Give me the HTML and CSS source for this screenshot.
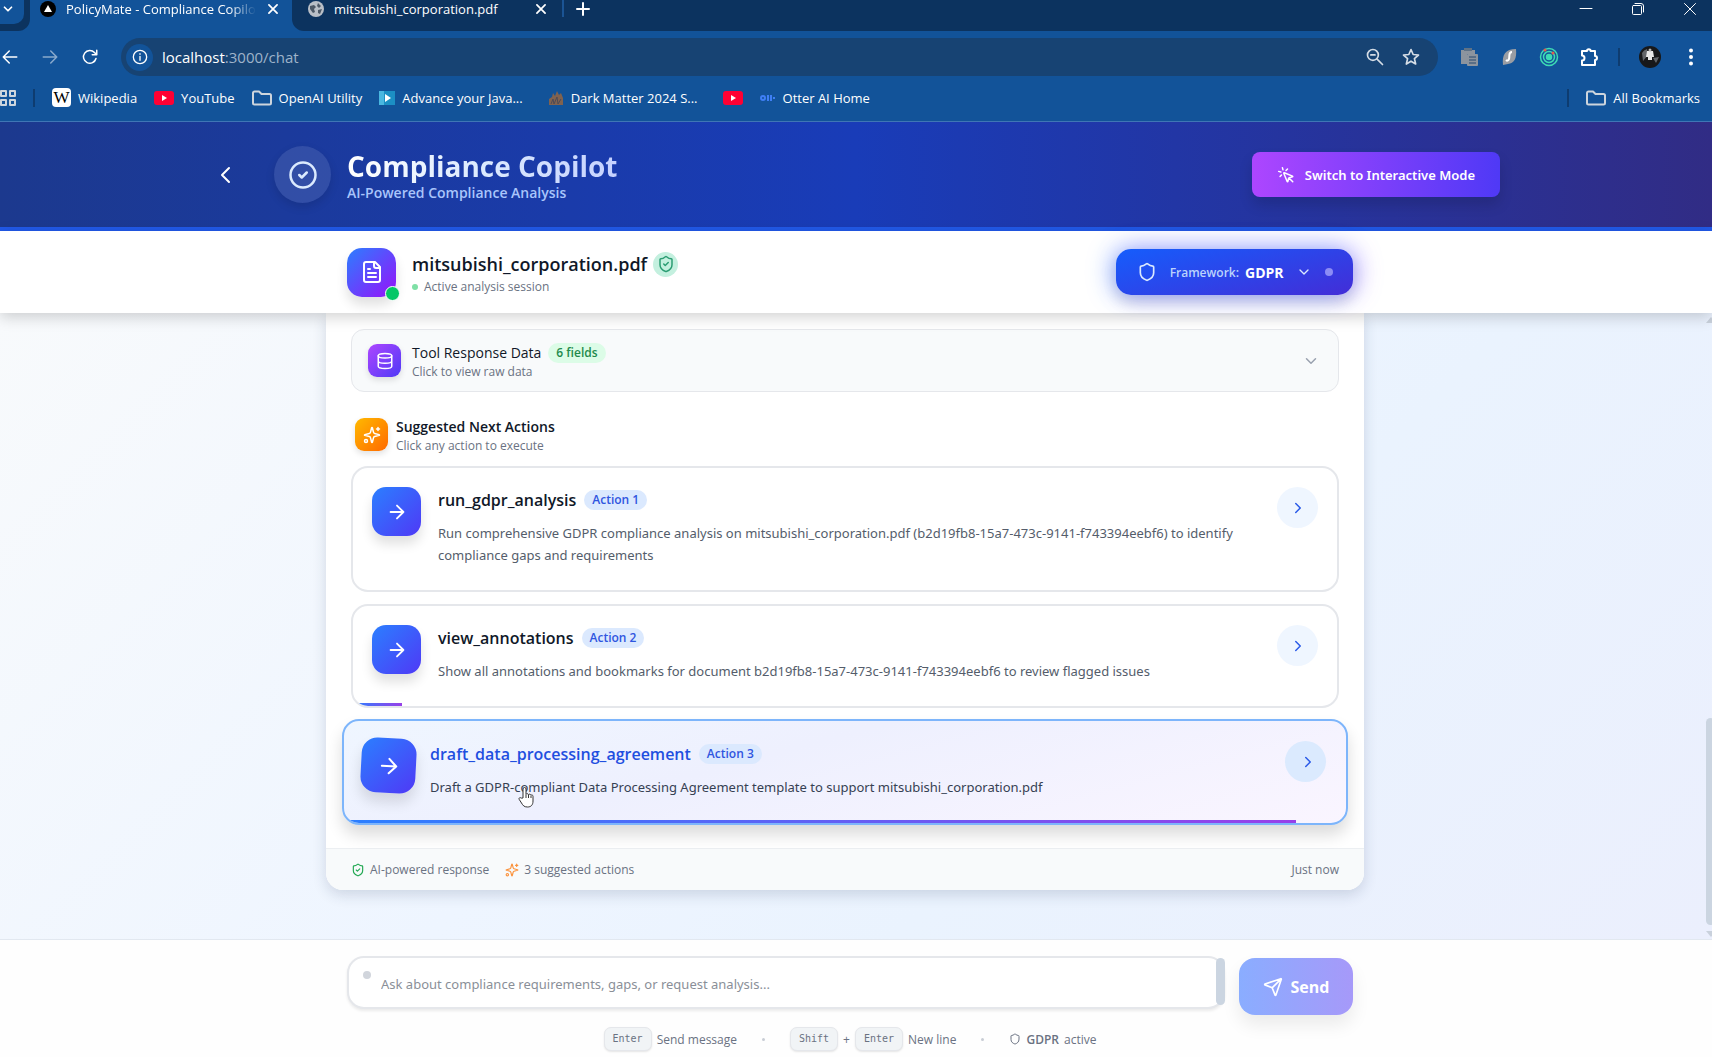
FILE: index.html
```html
<!DOCTYPE html>
<html lang="en">
<head>
  <meta charset="UTF-8">
  <meta name="viewport" content="width=device-width, initial-scale=1.0">
  <title>PolicyMate - Compliance Copilot</title>
  <link rel="stylesheet" href="styles.css">
</head>
<body>
  <svg class="defs" aria-hidden="true">
    <symbol id="i-arrow" viewBox="0 0 24 24"><path d="M5 12h14M12 5l7 7-7 7"/></symbol>
    <symbol id="i-right" viewBox="0 0 24 24"><path d="m9 18 6-6-6-6"/></symbol>
    <symbol id="i-left" viewBox="0 0 24 24"><path d="m15 19-7-7 7-7"/></symbol>
    <symbol id="i-down" viewBox="0 0 24 24"><path d="m6 9 6 6 6-6"/></symbol>
    <symbol id="i-x" viewBox="0 0 24 24"><path d="M5 5l14 14M19 5 5 19"/></symbol>
    <symbol id="i-shield" viewBox="0 0 24 24"><path d="M20 13c0 5-3.500 7.500-7.660 8.950a1 1 0 0 1-.67-.01C7.500 20.500 4 18 4 13V6a1 1 0 0 1 1-1c2 0 4.500-1.200 6.240-2.720a1.170 1.170 0 0 1 1.520 0C14.510 3.810 17 5 19 5a1 1 0 0 1 1 1z"/></symbol>
    <symbol id="i-shield-check" viewBox="0 0 24 24"><path d="M20 13c0 5-3.500 7.500-7.660 8.950a1 1 0 0 1-.67-.01C7.500 20.500 4 18 4 13V6a1 1 0 0 1 1-1c2 0 4.500-1.200 6.240-2.720a1.170 1.170 0 0 1 1.520 0C14.510 3.810 17 5 19 5a1 1 0 0 1 1 1z"/><path d="m9 12 2 2 4-4"/></symbol>
    <symbol id="i-sparkles" viewBox="0 0 24 24"><path d="M9.940 15.500A2 2 0 0 0 8.500 14.060l-6.140-1.580a.5.5 0 0 1 0-.96L8.500 9.940A2 2 0 0 0 9.940 8.500l1.580-6.140a.5.5 0 0 1 .96 0L14.060 8.500A2 2 0 0 0 15.500 9.940l6.140 1.580a.5.5 0 0 1 0 .96L15.500 14.060a2 2 0 0 0-1.440 1.440l-1.580 6.140a.5.5 0 0 1-.96 0z"/><path d="M20 2v4M22 4h-4"/><circle cx="4" cy="20" r="2"/></symbol>
    <symbol id="i-folder" viewBox="0 0 20 16"><path d="M1 13V3a1.500 1.500 0 0 1 1.500-1.500H7l2.500 2.500h8A1.500 1.500 0 0 1 19 5.500V13a1.500 1.500 0 0 1-1.500 1.500h-15A1.500 1.500 0 0 1 1 13z"/></symbol>
    <symbol id="i-youtube" viewBox="0 0 20 14"><rect width="20" height="14" rx="3" fill="#f03" stroke="none"/><path d="M8 4v6l5-3z" fill="#fff" stroke="none"/></symbol>
  </svg>

  <div class="browser">
    <div class="tabstrip">
      <div class="strip-start"><button class="tab-search" aria-label="Search tabs"><svg class="icon s14 w3"><use href="#i-down"/></svg></button></div>
      <div class="tab active">
        <svg class="s16" viewBox="0 0 16 16"><circle cx="8" cy="8" r="8" fill="#000"/><path d="M8 4l4 7H4z" fill="#fff"/></svg>
        <span class="tab-title">PolicyMate - Compliance Copilot</span>
        <button class="icon-btn" aria-label="Close tab"><svg class="icon s14 w3"><use href="#i-x"/></svg></button>
      </div>
      <div class="strip-rest">
        <div class="tab">
          <svg class="s16" viewBox="0 0 16 16"><circle cx="8" cy="8" r="8" fill="#b9bfc7"/><path d="M2 5l4-1 2 2-2 2 1 3-2 1-3-4zM10 2l3 3-2 2-2-2zM10 9l4-1-2 5-2-1z" fill="#4c5866"/></svg>
          <span class="tab-title">mitsubishi_corporation.pdf</span>
          <button class="icon-btn" aria-label="Close tab"><svg class="icon s14 w3"><use href="#i-x"/></svg></button>
        </div>
        <span class="tab-sep"></span>
        <button class="icon-btn" aria-label="New tab"><svg class="icon s16 w3" viewBox="0 0 24 24"><path d="M12 3v18M3 12h18"/></svg></button>
        <div class="window-btns">
          <button class="icon-btn" aria-label="Minimize"><svg class="icon s14 w1" viewBox="0 0 14 14"><path d="M1 6.500h12"/></svg></button>
          <button class="icon-btn" aria-label="Restore"><svg class="icon s14 w1" viewBox="0 0 14 14"><rect x="1.500" y="3.500" width="9" height="9" rx="1"/><path d="M4 1.500h6a2.500 2.500 0 0 1 2.500 2.500v6"/></svg></button>
          <button class="icon-btn" aria-label="Close window"><svg class="icon s14 w1" viewBox="0 0 14 14"><path d="M1.500 1.500l11 11M12.500 1.500l-11 11"/></svg></button>
        </div>
      </div>
    </div>

    <div class="toolbar">
      <div class="nav-btns">
        <button class="icon-btn" aria-label="Back"><svg class="icon s18" viewBox="0 0 24 24"><path d="M21 12H3M11 4l-8 8 8 8"/></svg></button>
        <button class="icon-btn dim" aria-label="Forward"><svg class="icon s18" viewBox="0 0 24 24"><path d="M3 12h18M13 4l8 8-8 8"/></svg></button>
        <button class="icon-btn" aria-label="Reload"><svg class="icon s18" viewBox="0 0 24 24"><path d="M20 14a8.500 8.500 0 1 1-2-8l2.500 2.500M21 3v6h-6"/></svg></button>
      </div>
      <div class="omnibox">
        <span class="site-info"><svg class="icon s16" viewBox="0 0 24 24"><circle cx="12" cy="12" r="10"/><path d="M12 11v6M12 7v1"/></svg></span>
        <span class="url">localhost<span>:3000/chat</span></span>
        <svg class="icon s20" viewBox="0 0 24 24"><circle cx="9.500" cy="9.500" r="6.500"/><path d="M7 9.500h5M14.500 14.500 21 21"/></svg>
        <svg class="icon s20" viewBox="0 0 24 24"><path d="M12 3l2.600 6 6.400.6-4.900 4.300 1.500 6.500L12 17l-5.600 3.400 1.500-6.500L3 9.600 9.400 9z"/></svg>
      </div>
      <div class="extensions">
        <svg class="s20" viewBox="0 0 20 20"><path d="M2 3h14v4H8v10H2z" fill="#8c949e"/><path d="M5 1h8v3H5z" fill="#5f7286"/><rect x="8" y="7" width="11" height="12" rx="1" fill="#8c949e"/><path d="M10 10h7M10 13h7M10 16h7" stroke="#26486e"/></svg>
        <svg class="s20" viewBox="0 0 20 20"><path d="M4 18C3 8 6 2 17 2c1 10-2 14-8 15z" fill="#9a9da3"/><path d="M13 5c-4 0-2 4-3 7-1 2-2 2-3 1" fill="none" stroke="#fff" stroke-width="2"/></svg>
        <svg class="s20" viewBox="0 0 20 20" fill="none" stroke="#3ddbb4" stroke-width="1.500"><circle cx="10" cy="10" r="8.500"/><circle cx="10" cy="10" r="5.500"/><circle cx="10" cy="10" r="2.500" fill="#3ddbb4"/><circle cx="6" cy="3" r="1.500" fill="#e0604c" stroke="none"/><circle cx="14" cy="6" r="1.500" fill="#e0604c" stroke="none"/></svg>
        <svg class="icon s20" viewBox="0 0 20 20"><path d="M3 4h5a1.800 1.800 0 0 1 3.600 0H16v5a2 2 0 0 1 0 4v5H3v-4.500a2.500 2.500 0 0 0 0-5z"/></svg>
        <span class="bar-sep"></span>
        <svg class="s22" viewBox="0 0 22 22"><circle cx="11" cy="11" r="11" fill="#17181a"/><path d="M3 7a9 9 0 0 1 5-4l1 6-5 6zM14 12l6-1-3 6z" fill="#63666a"/><path d="M8 5h6l1 6h-2v3h-4v-3H7z" fill="#e8e8e8"/><circle cx="11" cy="4" r="1.500" fill="#b5b5b5"/></svg>
        <svg class="s20" viewBox="0 0 20 20" fill="#fff"><circle cx="10" cy="3.500" r="2"/><circle cx="10" cy="10" r="2"/><circle cx="10" cy="16.500" r="2"/></svg>
      </div>
    </div>

    <nav class="bookmarks">
      <svg class="icon s16" viewBox="0 0 16 16"><path d="M1 1h5v5H1zM10 1h5v5h-5zM1 10h5v5H1zM10 10h5v5h-5z"/></svg>
      <span class="bar-sep"></span>
      <a href="#"><span class="wiki">W</span>Wikipedia</a>
      <a href="#"><svg class="yt"><use href="#i-youtube"/></svg>YouTube</a>
      <a href="#"><svg class="icon folder"><use href="#i-folder"/></svg>OpenAI Utility</a>
      <a href="#" class="long"><svg class="s16" viewBox="0 0 16 16"><path d="M0 1h16v14H0z" fill="#1c8fc4"/><path d="M0 1h5v14H0z" fill="#49b7e0"/><path d="M6 4v8l6-4z" fill="#fff"/></svg>Advance your Java...</a>
      <a href="#" class="long"><svg class="s16" viewBox="0 0 16 16"><path d="M1 15V9l3-2 1-4 2 3 2-5 2 4 2-2 2 5v7z" fill="#80624f"/><path d="M3 14l2-5 1 5 3-7 1 7 3-5" stroke="#4d4a55" fill="none"/></svg>Dark Matter 2024 S...</a>
      <a href="#" aria-label="YouTube"><svg class="yt"><use href="#i-youtube"/></svg></a>
      <a href="#"><svg class="s16" viewBox="0 0 16 16" fill="none" stroke="#3f7ff5" stroke-width="2"><circle cx="3" cy="8" r="2"/><path d="M8 5v6M11 5v6M14 7v2"/></svg>Otter AI Home</a>
      <span class="bar-sep push"></span>
      <a href="#"><svg class="icon folder"><use href="#i-folder"/></svg>All Bookmarks</a>
    </nav>
  </div>

  <header class="app-header">
    <div class="header-inner">
      <button class="back" aria-label="Go back"><svg class="icon s24"><use href="#i-left"/></svg></button>
      <div class="logo"><svg class="icon s30" viewBox="0 0 24 24"><circle cx="12" cy="12" r="10"/><path d="m9 12 2 2 4-4"/></svg></div>
      <div class="brand">
        <h1>Compliance Copilot</h1>
        <p>AI-Powered Compliance Analysis</p>
      </div>
      <button class="mode-btn">
        <svg class="icon s18" viewBox="0 0 24 24"><path d="M14 4.100 12 6M5.100 8l-2.900-.8M6 12l-1.900 2M7.200 2.200 8 5.100M9.040 9.690a.5.5 0 0 1 .65-.65l11 4.500a.5.5 0 0 1-.07.950l-4.350 1.040a1 1 0 0 0-.74.74l-1.040 4.350a.5.5 0 0 1-.95.070zM16 16l5 5"/></svg>
        Switch to Interactive Mode
      </button>
    </div>
  </header>

  <section class="doc-bar">
    <div class="doc-inner">
      <div class="doc-icon">
        <svg class="icon s24" viewBox="0 0 24 24"><path d="M15 2H6a2 2 0 0 0-2 2v16a2 2 0 0 0 2 2h12a2 2 0 0 0 2-2V7zM14 2v4a2 2 0 0 0 2 2h4M10 9H8M16 13H8M16 17H8"/></svg>
        <span class="online"></span>
      </div>
      <div class="doc-text">
        <h2>mitsubishi_corporation.pdf <span class="verified"><svg class="icon s18"><use href="#i-shield-check"/></svg></span></h2>
        <p><span class="dot green"></span>Active analysis session</p>
      </div>
      <div class="framework">
        <svg class="icon s20"><use href="#i-shield"/></svg>
        <label for="framework">Framework:</label>
        <select id="framework"><option>GDPR</option></select>
        <svg class="icon s16"><use href="#i-down"/></svg>
        <span class="dot pale"></span>
      </div>
    </div>
  </section>

  <main class="chat">
    <article class="message">
      <div class="message-body">
        <button class="tool">
          <span class="tile purple"><svg class="icon s18" viewBox="0 0 24 24"><ellipse cx="12" cy="5" rx="9" ry="3"/><path d="M3 5v14a9 3 0 0 0 18 0V5M3 12a9 3 0 0 0 18 0"/></svg></span>
          <span class="stack">
            <span class="row-title">Tool Response Data <span class="pill mint">6 fields</span></span>
            <span class="note">Click to view raw data</span>
          </span>
          <svg class="icon s18"><use href="#i-down"/></svg>
        </button>

        <div class="suggest-head">
          <span class="tile orange"><svg class="icon s18"><use href="#i-sparkles"/></svg></span>
          <div class="stack">
            <h3>Suggested Next Actions</h3>
            <p class="note">Click any action to execute</p>
          </div>
        </div>

        <div class="actions">
          <button class="action">
            <span class="action-icon"><svg class="icon s22"><use href="#i-arrow"/></svg></span>
            <span class="action-text">
              <span class="action-title">run_gdpr_analysis <span class="pill blue">Action 1</span></span>
              <span class="desc">Run comprehensive GDPR compliance analysis on mitsubishi_corporation.pdf (b2d19fb8-15a7-473c-9141-f743394eebf6) to identify compliance gaps and requirements</span>
            </span>
            <span class="go"><svg class="icon s18"><use href="#i-right"/></svg></span>
          </button>
          <button class="action">
            <span class="action-icon"><svg class="icon s22"><use href="#i-arrow"/></svg></span>
            <span class="action-text">
              <span class="action-title">view_annotations <span class="pill blue">Action 2</span></span>
              <span class="desc">Show all annotations and bookmarks for document b2d19fb8-15a7-473c-9141-f743394eebf6 to review flagged issues</span>
            </span>
            <span class="go"><svg class="icon s18"><use href="#i-right"/></svg></span>
            <span class="track"><span class="progress" style="width:5%"></span></span>
          </button>
          <button class="action hovered">
            <span class="action-icon"><svg class="icon s22"><use href="#i-arrow"/></svg></span>
            <span class="action-text">
              <span class="action-title">draft_data_processing_agreement <span class="pill blue">Action 3</span></span>
              <span class="desc">Draft a GDPR-compliant Data Processing Agreement template to support mitsubishi_corporation.pdf</span>
            </span>
            <span class="go"><svg class="icon s18"><use href="#i-right"/></svg></span>
            <span class="track"><span class="progress" style="width:95%"></span></span>
            <svg class="cursor" viewBox="0 0 16 22"><path d="M5 12V3a1.500 1.500 0 0 1 3 0v5.500a1.300 1.300 0 0 1 2.500.3 1.300 1.300 0 0 1 2.400.6 1.200 1.200 0 0 1 2.100.9V15c0 4-2 6-5.500 6S5 19.500 3.500 17L1.200 13.400c-.8-1.400.9-2.400 2-1.300z" fill="#fff" stroke="#333" stroke-width="1"/><path d="M8 9v3M10.500 9v3M13 10v2" stroke="#333" fill="none"/></svg>
          </button>
        </div>
      </div>
      <footer class="message-foot">
        <span><svg class="icon s14 ok"><use href="#i-shield-check"/></svg>AI-powered response</span>
        <span><svg class="icon s14 spark"><use href="#i-sparkles"/></svg>3 suggested actions</span>
        <time>Just now</time>
      </footer>
    </article>
    <div class="scrollbar"><span class="up"></span><span class="thumb"></span><span class="down"></span></div>
  </main>

  <footer class="composer">
    <form class="composer-row">
      <div class="field">
        <span class="dot grey"></span>
        <textarea rows="1" aria-label="Message" placeholder="Ask about compliance requirements, gaps, or request analysis..."></textarea>
        <span class="field-thumb"></span>
      </div>
      <button class="send" type="button"><svg class="icon s20" viewBox="0 0 24 24"><path d="M14.540 21.690a.5.5 0 0 0 .94-.02l6.500-19a.5.5 0 0 0-.64-.64l-19 6.500a.5.5 0 0 0-.02.940l7.930 3.180a2 2 0 0 1 1.110 1.110zM21.850 2.150l-10.940 10.940"/></svg>Send</button>
    </form>
    <div class="hints">
      <span><kbd>Enter</kbd>Send message</span>
      <i></i>
      <span><kbd>Shift</kbd>+<kbd>Enter</kbd>New line</span>
      <i></i>
      <span><svg class="icon s12"><use href="#i-shield"/></svg><b>GDPR</b>active</span>
    </div>
  </footer>
</body>
</html>
```

FILE: styles.css
```css
:root { --toolbar:#125399; --strip:#0c335f; --blue:#2b7fff; --indigo:#4f39f6; --purple:#ad46ff; --muted:#6a7282; --line:#e5e7eb; }
*{box-sizing:border-box;}
body{margin:0;height:100vh;display:flex;flex-direction:column;overflow:hidden;background:#fff;color:#101828;font-family:'Open Sans','Noto Sans',sans-serif;}
h1,h2,h3,p{margin:0;}
button,select,textarea{font-family:inherit;color:inherit;border:0;background:none;padding:0;margin:0;}
button{cursor:pointer;text-align:left;}
svg{flex:none;display:block;}
.defs{position:absolute;width:0;height:0;}
.icon{fill:none;stroke:currentColor;stroke-width:2;stroke-linecap:round;stroke-linejoin:round;}
.w1{stroke-width:1;}
.w3{stroke-width:3;}
.s12{width:12px;height:12px;}
.s14{width:14px;height:14px;}
.s16{width:16px;height:16px;}
.s18{width:18px;height:18px;}
.s20{width:20px;height:20px;}
.s22{width:22px;height:22px;}
.s24{width:24px;height:24px;}
.s30{width:30px;height:30px;}

/* browser frame */
.browser{flex:none;background:var(--toolbar);color:#fff;border-bottom:1px solid #3f76b5;}
.tabstrip{display:flex;height:31px;}
.strip-start{width:30px;background:var(--strip);border-bottom-right-radius:12px;}
.tab-search{display:flex;justify-content:center;width:24px;height:24px;padding:2px 8px 0 0;background:var(--toolbar);border-bottom-right-radius:10px;}
.tab{display:flex;align-items:center;gap:10px;width:262px;height:18px;padding:0 12px 0 10px;font-size:13px;}
.tab-title{flex:1;min-width:0;overflow:hidden;white-space:nowrap;}
.tab.active .tab-title{-webkit-mask-image:linear-gradient(90deg,#000 86%,transparent);mask-image:linear-gradient(90deg,#000 86%,transparent);}
.strip-rest{flex:1;display:flex;background:var(--strip);border-bottom-left-radius:12px;}
.strip-rest .tab{width:270px;padding:0 14px 0 16px;}
.tab-sep{width:2px;height:17px;background:#1b5494;margin-right:11px;}
.icon-btn{display:flex;align-items:center;height:18px;}
.icon-btn.dim{opacity:.5;}
.window-btns{display:flex;gap:38px;margin-left:auto;padding-right:15px;height:16px;}
.toolbar{display:flex;align-items:center;padding-top:7px;padding-right:11px;}
.nav-btns{display:flex;gap:22px;width:121px;padding-left:1px;}
.omnibox{flex:1;display:flex;align-items:center;gap:16px;height:38px;padding:0 17px 0 5px;border-radius:19px;background:#174373;color:#d5dde6;}
.site-info{display:grid;place-items:center;width:27px;height:27px;border-radius:50%;background:var(--toolbar);color:#fff;}
.url{flex:1;margin-left:-7px;font-size:15px;color:#fff;}
.url span{color:#9fb3ca;}
.extensions{display:flex;align-items:center;gap:20px;padding-left:21px;}
.bar-sep{width:2px;height:18px;background:#0e3c70;}
.extensions .bar-sep{margin:0 -1px;}
.bookmarks{display:flex;align-items:center;gap:17px;height:45px;padding:0 12px 2px 0;font-size:13px;}
.bookmarks a{display:flex;align-items:center;gap:7px;color:inherit;text-decoration:none;white-space:nowrap;}
.bookmarks .long{padding-right:8px;}
.bookmarks .push{margin-left:auto;}
.bookmarks .icon{color:#cdd5dd;}
.bookmarks .folder,.bookmarks .yt{width:20px;height:16px;}
.wiki{width:19px;height:19px;border-radius:4px;background:#fff;color:#000;font:17px/19px 'Liberation Serif',serif;text-align:center;}

/* page header */
.app-header{flex:none;background:linear-gradient(90deg,#1c398e 0%,#193cb8 50%,#312c85 100%);border-bottom:4px solid #2159e8;}
.header-inner{display:flex;align-items:center;max-width:1288px;height:105px;margin:0 auto;color:#fff;}
.back{padding:2px;margin-right:34px;}
.logo{display:grid;place-items:center;width:57px;height:57px;border-radius:50%;background:rgba(255,255,255,.1);box-shadow:0 4px 10px rgba(0,0,0,.12);color:#dbeafe;}
.brand{margin-left:16px;padding-top:2px;}
.brand h1{font-size:28px;line-height:34px;font-weight:700;color:transparent;background:linear-gradient(90deg,#fff,#dbeafe 50%,#c6d2ff);-webkit-background-clip:text;background-clip:text;}
.brand p{font-size:14px;line-height:20px;font-weight:600;color:#a9c5fb;}
.mode-btn{display:flex;align-items:center;gap:10px;margin-left:auto;height:45px;padding:0 25px;border-radius:8px;background:linear-gradient(90deg,var(--purple),var(--indigo));box-shadow:0 8px 14px rgba(0,0,0,.14);font-family:'Noto Sans',sans-serif;font-size:13px;font-weight:600;}

/* document bar */
.doc-bar{flex:none;position:relative;z-index:2;padding-right:12px;background:#fff;box-shadow:0 4px 14px rgba(0,0,0,.18);}
.doc-inner{display:flex;align-items:center;max-width:1006px;height:82px;margin:0 auto;}
.doc-icon{position:relative;display:grid;place-items:center;width:49px;height:49px;border-radius:15px;background:linear-gradient(135deg,var(--blue),#9810fa);box-shadow:0 8px 12px rgba(0,0,0,.12);color:#fff;}
.online{position:absolute;right:-4px;bottom:-4px;width:15px;height:15px;border-radius:50%;border:1px solid #fff;background:#05c767;}
.doc-text{margin-left:16px;padding-top:4px;}
.doc-text h2{display:flex;align-items:center;gap:6px;font-size:18px;line-height:25px;font-weight:600;}
.verified{display:grid;place-items:center;width:25px;height:25px;border-radius:50%;background:#c4f0df;color:#2b9d73;}
.doc-text p{display:flex;align-items:center;gap:6px;font-size:12px;line-height:20px;color:var(--muted);}
.dot{flex:none;width:8px;height:8px;border-radius:50%;}
.dot.green{width:6px;height:6px;background:#7fe0a6;}
.dot.pale{background:#8c8cf5;margin-left:13px;}
.dot.grey{background:#d1d5dc;}
.framework{display:flex;align-items:center;height:46px;margin-left:auto;padding:0 20px 0 21px;border-radius:15px;background:linear-gradient(165deg,#155dfc,#432dd7);box-shadow:-5px 0 24px rgba(43,127,255,.4),5px 0 24px rgba(142,81,255,.4),0 8px 14px rgba(0,0,0,.12);color:#dbeafe;}
.framework label{margin:0 6px 0 13px;font-size:12px;font-weight:600;color:#bcd3fc;}
.framework select{appearance:none;margin-right:12px;font-size:14px;font-weight:700;color:#fff;}

/* conversation */
.chat{flex:1;min-height:0;position:relative;padding:0 22px 49px 0;background:linear-gradient(135deg,#f8fafc 0%,#eef5ff 45%,#eaf3fe 65%,#ebeffd 100%);}
.message{max-width:1038px;height:100%;margin:0 auto;display:flex;flex-direction:column;background:#fff;border-radius:0 0 17px 17px;box-shadow:0 5px 14px rgba(30,50,90,.16);}
.message-body{flex:1;padding:16px 25px 0;}
.tool{display:flex;align-items:center;width:100%;height:63px;padding:0 18px 0 16px;border:1px solid var(--line);border-radius:13px;background:#f8fafb;}
.tool>.icon{margin-left:auto;color:#99a1af;}
.tile{display:grid;place-items:center;width:33px;height:33px;border-radius:9px;color:#fff;box-shadow:0 3px 6px rgba(0,0,0,.12);}
.purple{background:linear-gradient(135deg,var(--purple),var(--indigo));}
.orange{background:linear-gradient(135deg,#ffb900,#ff6900);}
.stack{display:flex;flex-direction:column;margin-left:11px;padding-top:3px;}
.row-title{display:flex;align-items:center;gap:7px;font-size:14px;line-height:20px;font-weight:500;}
.note{font-size:12px;line-height:18px;color:var(--muted);}
.pill{height:20px;padding:0 8px;border-radius:10px;font-size:12px;line-height:20px;font-weight:600;}
.mint{background:#dcfce7;color:#1f8a4c;}
.blue{background:#dbe9fe;color:#2f55e0;}
.suggest-head{display:flex;align-items:center;height:33px;margin:26px 0 15px 4px;}
.suggest-head .stack{margin-left:8px;}
.suggest-head h3{font-size:14px;line-height:20px;font-weight:600;}
.actions{display:flex;flex-direction:column;gap:12px;}
.action{position:relative;display:flex;align-items:flex-start;padding:19px 19px 24px;border:2px solid var(--line);border-radius:17px;background:#fff;}
.action-icon{display:grid;place-items:center;flex:none;width:49px;height:49px;border-radius:14px;background:linear-gradient(135deg,var(--blue),var(--indigo));box-shadow:0 8px 12px rgba(0,0,0,.12);color:#fff;}
.action-text{flex:1;display:block;margin:0 15px 0 17px;}
.action-title{display:flex;align-items:center;gap:8px;height:26px;font-size:16px;font-weight:600;}
.desc{display:block;margin-top:9px;font-family:'Noto Sans',sans-serif;font-size:13px;line-height:22px;color:#545d6b;}
.go{display:grid;place-items:center;flex:none;width:41px;height:41px;border-radius:50%;background:#eff6ff;color:#2b5be8;}
.track{position:absolute;inset:0;overflow:hidden;border-radius:15px;}
.progress{position:absolute;left:0;bottom:0;height:3px;background:linear-gradient(90deg,var(--blue),#9840e8);}
.hovered{margin:-1px -9px;padding:20px 20px 25px;border-color:#7db5fb;background:linear-gradient(165deg,#eff6ff,#eef0fe 40%,#faf5ff);box-shadow:0 10px 16px rgba(0,0,0,.14);}
.hovered .action-icon{transform:rotate(3deg) scale(1.12);}
.hovered .action-title{color:#1f4fe0;}
.hovered .desc{color:#364153;}
.hovered .go{background:#dbeafe;padding-left:5px;}
.cursor{position:absolute;left:174px;top:65px;width:16px;height:22px;}
.message-foot{display:flex;align-items:center;gap:16px;height:42px;padding:0 25px;border-top:1px solid #eceff2;border-radius:0 0 17px 17px;background:#f8fafb;font-size:12px;color:var(--muted);}
.message-foot span{display:flex;align-items:center;gap:5px;}
.message-foot time{margin-left:auto;}
.ok{color:#22a852;}
.spark{color:#fb923c;}
.scrollbar{position:absolute;top:4px;right:-4px;bottom:2px;width:11px;display:flex;flex-direction:column;align-items:center;}
.up,.down{border:5px solid transparent;border-top:0;border-bottom:6px solid #c9d1dc;}
.down{border-bottom:0;border-top:6px solid #c9d1dc;}
.thumb{width:9px;height:207px;margin:auto 0 6px;border-radius:5px;background:#cbd5e1;}

/* composer */
.composer{flex:none;padding:16px 12px 6px 0;border-top:1px solid #e2e8f0;background:#fefefe;}
.composer-row{display:flex;align-items:flex-start;gap:14px;max-width:1006px;margin:0 auto;}
.field{position:relative;flex:1;display:flex;align-items:flex-start;height:53px;padding:13px 14px;border:2px solid var(--line);border-radius:17px;background:#fff;box-shadow:0 2px 3px rgba(0,0,0,.08);}
.field textarea{flex:1;height:26px;margin-left:10px;padding-top:2px;resize:none;outline:0;overflow:hidden;font-family:'Noto Sans',sans-serif;font-size:13px;line-height:22px;}
.field textarea::placeholder{color:#8a8f98;}
.field-thumb{position:absolute;right:-2px;top:0;width:9px;height:47px;border-radius:5px;background:#cbd5e1;}
.send{display:flex;align-items:center;justify-content:center;gap:8px;width:114px;height:57px;margin-top:2px;border-radius:16px;background:linear-gradient(90deg,#8aadff,#a699f9);box-shadow:0 10px 18px rgba(0,0,0,.08);color:#fff;font-size:16px;font-weight:700;}
.hints{display:flex;align-items:center;justify-content:center;gap:25px;margin-top:12px;font-size:12px;color:var(--muted);}
.hints span{display:flex;align-items:center;gap:5px;}
.hints i{width:3px;height:3px;border-radius:50%;background:#c8cdd5;}
.hints b{font-weight:600;}
kbd{height:24px;padding:0 8px;border:1px solid var(--line);border-radius:7px;background:#f1f4f6;box-shadow:0 1px 2px rgba(0,0,0,.1);font:10px/22px 'DejaVu Sans Mono','Liberation Mono',monospace;}
```
